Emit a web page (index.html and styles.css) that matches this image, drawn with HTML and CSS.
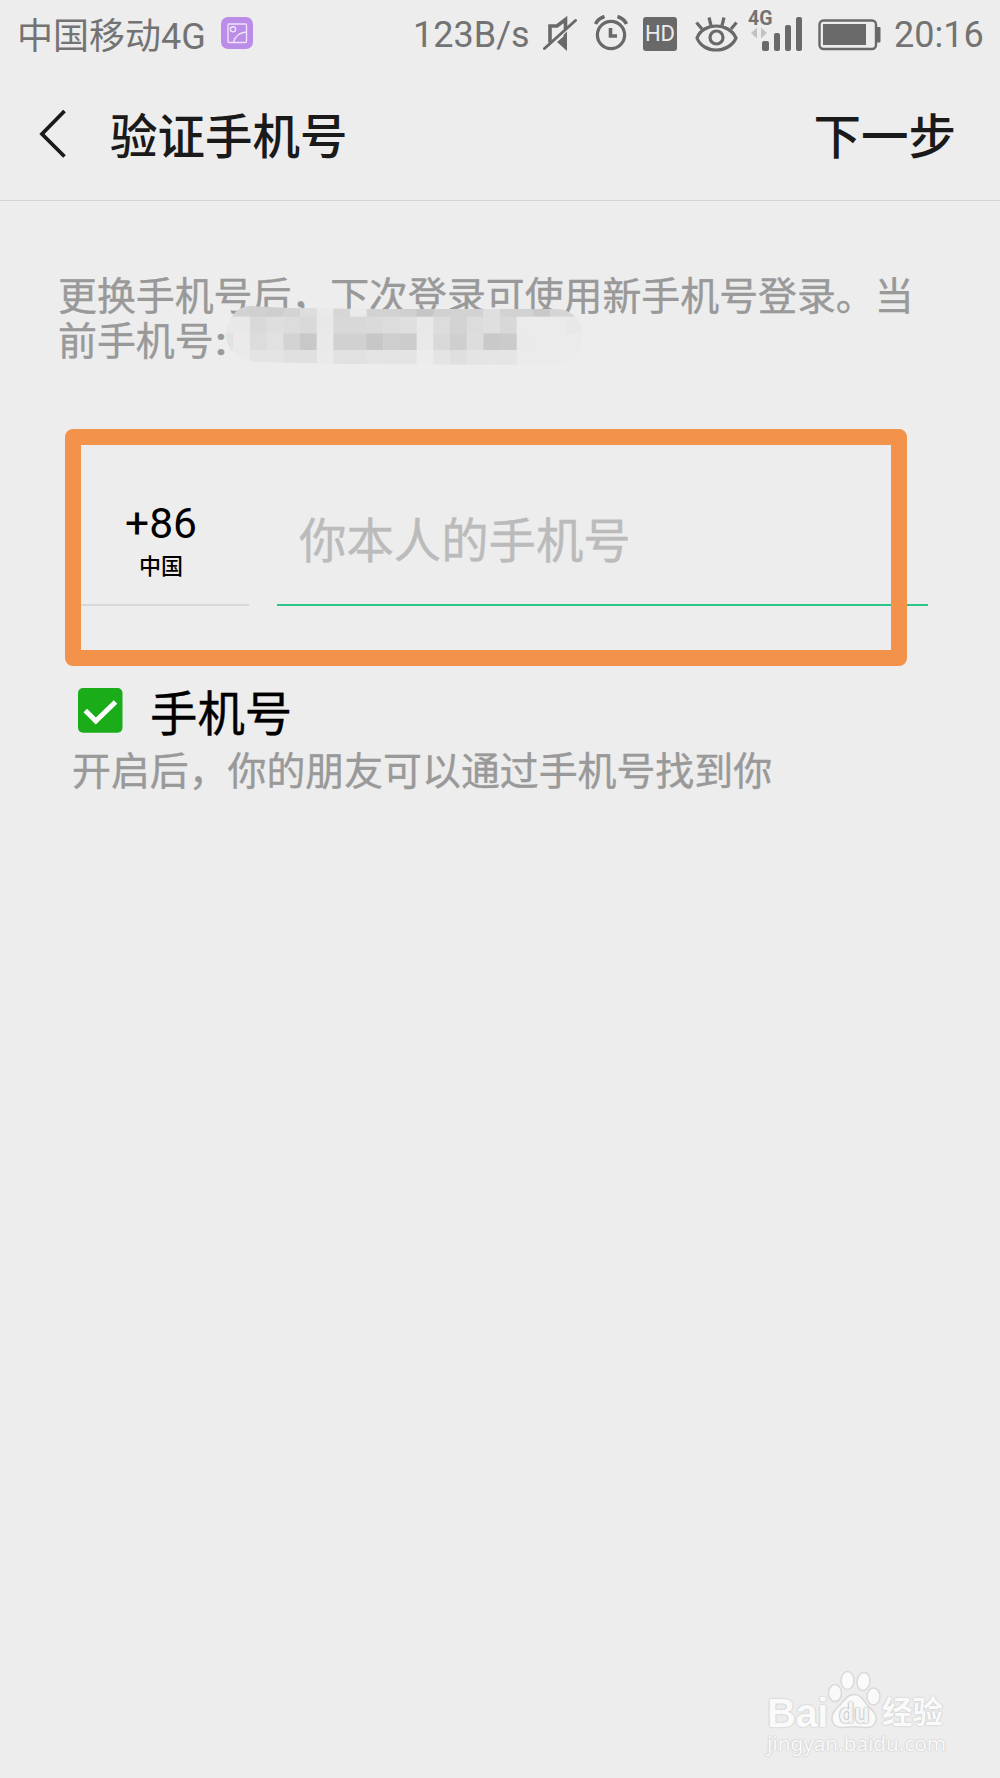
FILE: index.html
```html
<!DOCTYPE html>
<html lang="zh-CN">
<head>
	<meta charset="utf-8">
	<title>验证手机号</title>
	<meta name="viewport" content="width=device-width">
	<link rel="stylesheet" href="styles.css">
</head>
<body>
	<div class="status">
		<span class="carrier">中国移动4G</span>
		<svg class="photo" width="32" height="32" viewBox="0 0 32 32">
			<rect width="32" height="32" rx="7" fill="#bb8ce8"/>
			<g fill="none" stroke="#f0e2fb" stroke-width="1.4">
				<rect x="7" y="7" width="18.500" height="18.500" rx="1"/>
				<circle cx="12" cy="12.300" r="2.600"/>
				<path d="M12.500 25.500C14 19 18.500 15.500 25.500 15"/>
			</g>
		</svg>
		<span class="speed">123B/s</span>
		<svg class="mute" width="34" height="36" viewBox="0 0 34 36">
			<g fill="none" stroke="#696969" stroke-width="3.600">
				<path d="M7 26.500V10h7l8.500-6.500V13"/>
				<path d="M1.500 32.500L32.500 4.500" stroke-linecap="round" stroke-width="3"/>
			</g>
			<path d="M14 26l6.500-5.500V19l3.500-3.500V35z" fill="#696969"/>
		</svg>
		<svg class="alarm" width="34" height="36" viewBox="0 0 34 36">
			<g fill="none" stroke="#696969">
				<circle cx="17" cy="20" r="13.600" stroke-width="3.200"/>
				<path d="M16.500 13v8H23" stroke-width="3.600"/>
				<path d="M1.500 9C3 5.500 6 3 10.500 1.500M32.500 9C31 5.500 28 3 23.500 1.500" stroke-width="3.600"/>
			</g>
		</svg>
		<span class="hd">HD</span>
		<svg class="eye" width="44" height="36" viewBox="0 0 44 36">
			<g fill="none" stroke="#696969" stroke-width="3.200">
				<path d="M3 22C9 6 35 6 42 22C35 38 9 38 3 22z"/>
				<circle cx="22.500" cy="21.500" r="6.500"/>
				<path d="M2.500 6.500l5.500 6.500M15 1.500l2 8M30 1.500L28 9.500M42.500 6.500L37 13"/>
			</g>
		</svg>
		<div class="signal">
			<span class="net">4G</span>
			<svg width="54" height="36" viewBox="0 0 54 36">
				<path d="M2 17l6-5.500v11zM18 17l-6-5.500v11z" fill="#c2c2c2"/>
				<g fill="#696969">
					<rect x="13" y="25" width="7" height="10" rx="2"/>
					<rect x="25" y="17" width="6" height="18" rx="2"/>
					<rect x="36" y="9" width="6" height="26" rx="2"/>
					<rect x="47" y="1" width="6" height="34" rx="2"/>
				</g>
			</svg>
		</div>
		<svg class="battery" width="63" height="32" viewBox="0 0 63 32">
			<rect x="1.500" y="1.500" width="56.500" height="28.500" rx="4" fill="none" stroke="#696969" stroke-width="2.400"/>
			<rect x="5" y="5" width="43" height="21" fill="#696969"/>
			<rect x="58" y="8" width="4.500" height="15.500" rx="1" fill="#696969"/>
		</svg>
		<span class="time">20:16</span>
	</div>

	<div class="header">
		<svg class="back" width="28" height="50" viewBox="0 0 28 50">
			<path d="M25.500 2L3 25L25.500 47.500" fill="none" stroke="#1a1a1a" stroke-width="3.800"/>
		</svg>
		<h1>验证手机号</h1>
		<a class="next">下一步</a>
	</div>

	<div class="tip">
		<p>更换手机号后，下次登录可使用新手机号登录。当<br>前手机号<b>:</b></p>
		<!-- 号码打码 -->
		<svg class="mosaic" width="357" height="60" viewBox="226 306 357 60">
			<defs>
				<clipPath id="brush"><path d="M226 335C227 320 236 306 250 306L290 308L380 309H556C573 309 583 322 583 336C583 352 573 365 553 365L340 364L262 362C240 362 226 350 226 335z"/></clipPath>
			</defs>
			<g id="cells" clip-path="url(#brush)"></g>
		</svg>
	</div>

	<div class="form">
		<div class="code">
			<strong>+86</strong>
			<span>中国</span>
		</div>
		<div class="phone">你本人的手机号</div>
		<div class="frame"></div>
	</div>

	<div class="option">
		<svg width="45" height="45" viewBox="0 0 45 45">
			<rect width="44.500" height="44.800" rx="5" fill="#1aad19"/>
			<path d="M7.300 22.500L17.800 33L37.500 14" fill="none" stroke="#fff" stroke-width="5"/>
		</svg>
		<span>手机号</span>
	</div>
	<p class="note">开启后，你的朋友可以通过手机号找到你</p>

	<div class="watermark">
		<div class="logo">
			<span class="bai">Bai</span>
			<div class="paw">
				<svg width="54" height="60" viewBox="0 0 54 60">
					<g fill="#fafafa" stroke="#d9d9d9" stroke-width="1.500">
						<ellipse cx="8" cy="23" rx="6.500" ry="8.500"/>
						<ellipse cx="20.500" cy="10.500" rx="6.500" ry="9"/>
						<ellipse cx="36.500" cy="11.500" rx="6.500" ry="9" transform="rotate(8 36.500 11.500)"/>
						<ellipse cx="46.500" cy="26.500" rx="6.500" ry="8.500"/>
						<path d="M27 24.500C34 24.500 37 31 41 36C46 41 50 44 49 50C48 57 42 58 37 57.500C30 56.500 24 56.500 17 57.500C10 58 5 55 5 48C5 42 9 39 13 35C17 31 20 24.500 27 24.500z"/>
					</g>
				</svg>
				<span>du</span>
			</div>
			<span class="jy">经验</span>
		</div>
		<div class="url">jingyan.baidu.com</div>
	</div>

	<script type="text/javascript">
		(function(){
			// 每格的灰度, 四行
			var rows = [
				'd8 d2 d0 ce d3 dd e9 d6 ea d2 d2 cf c6 d1 d2 d2 df d2 d2 c9 d5 d6',
				'e9 e8 d9 de dc d9 e8 d8 d8 da dc df e8 dc d3 dc df d8 eb eb eb e8',
				'e2 ea dc e1 d3 c8 e9 d1 d1 c7 cf cc e9 d9 cf dd c9 cb ea eb eb eb',
				'ea ea e4 e4 e0 e0 ea e1 e1 e4 e4 e4 ec e4 df e4 e5 e5 eb eb eb eb'
			];
			var size = 50 / 3;
			var str = '';
			for(var i=0;i<rows.length;i++){
				var cells = rows[i].split(' ');
				for(var j=0;j<cells.length;j++){
					var c = cells[j];
					str += '<rect x="'+ (13 + j) * size +'" y="'+ (18 + i) * size +'" width="17" height="17" fill="#'+ c + c + c +'"/>';
				}
			}
			document.getElementById('cells').innerHTML = str;
		})()
	</script>
</body>
</html>
```

FILE: styles.css
```css
*{
	margin: 0;
	padding: 0;
	box-sizing: border-box;
}
body{
	position: relative;
	height: 1778px;
	background: #ededed;
	font-family: Roboto, "Noto Sans CJK SC", sans-serif;
	overflow: hidden;
}
svg{
	display: block;
	flex: none;
}
.status{
	display: flex;
	height: 68px;
	padding-left: 17px;
	color: #737373;
	font-size: 36px;
	line-height: 70px;
	white-space: nowrap;
}
.carrier{
	width: 204px;
	line-height: 74px;
}
.photo{
	margin-top: 17px;
}
.speed{
	width: 130px;
	margin-left: 160px;
}
.mute{
	margin-top: 16px;
}
.alarm{
	margin: 15px 0 0 17px;
}
.hd{
	width: 34px;
	height: 34px;
	margin: 17px 0 0 15px;
	border-radius: 3px;
	background: #696969;
	color: #ececec;
	font-size: 22px;
	line-height: 33px;
	text-align: center;
}
.eye{
	margin: 16px 0 0 17px;
}
.signal{
	position: relative;
	margin: 16px 0 0 11px;
}
.net{
	position: absolute;
	left: -1px;
	top: -7px;
	font-size: 19.5px;
	font-weight: bold;
	line-height: 20px;
}
.battery{
	margin: 19px 0 0 15px;
}
.time{
	margin-left: 13px;
}
.header{
	display: flex;
	align-items: center;
	height: 133px;
	padding: 0 44px 0 39px;
	border-bottom: 1px solid #d2d2d2;
	color: #1a1a1a;
	font-size: 47.5px;
}
.header h1{
	flex: 1;
	margin-left: 43px;
	padding-top: 8px;
	font-size: 47.5px;
	font-weight: 500;
	line-height: 124px;
}
.next{
	padding-top: 8px;
	font-weight: 500;
	line-height: 124px;
}
.tip{
	position: relative;
	height: 162px;
	padding: 73px 0 0 58px;
	color: #999;
	font-size: 38.9px;
	line-height: 45px;
	white-space: nowrap;
	-webkit-text-stroke: 0.4px #999;
}
.tip b{
	margin-left: 2px;
}
.mosaic{
	position: absolute;
	left: 226px;
	top: 105px;
}
.form{
	position: relative;
	display: flex;
	gap: 28px;
	height: 256px;
	margin-top: 66px;
	padding: 69px 0 0 73px;
}
.code{
	display: flex;
	flex-direction: column;
	align-items: center;
	width: 176px;
	height: 108px;
	border-bottom: 2px solid #d9d9d9;
}
.code strong{
	font-size: 42.5px;
	font-weight: normal;
	line-height: 52px;
}
.code span{
	font-size: 22px;
	font-weight: 500;
	line-height: 34px;
}
.phone{
	width: 651px;
	height: 108px;
	padding: 9px 0 0 22px;
	border-bottom: 2px solid #2bc686;
	color: #bbb;
	font-size: 47.4px;
	line-height: 70px;
	-webkit-text-stroke: 0.4px #bbb;
}
.frame{
	position: absolute;
	left: 65px;
	top: 0;
	width: 842px;
	height: 237px;
	border: 16px solid #f3924a;
	border-radius: 8px;
}
.option{
	display: flex;
	align-items: center;
	gap: 27px;
	height: 50px;
	padding-left: 78px;
	font-size: 47.4px;
}
.option span{
	padding-top: 10px;
	line-height: 50px;
	-webkit-text-stroke: 0.4px #000;
}
.note{
	padding: 12px 0 0 72px;
	color: #999;
	font-size: 38.9px;
	line-height: 50px;
	-webkit-text-stroke: 0.4px #999;
}
.watermark{
	position: absolute;
	left: 767px;
	top: 1670px;
	color: #fafafa;
	text-shadow: 0 0 2px #c4c4c4, 0 0 1px #c4c4c4;
}
.logo{
	display: flex;
	height: 60px;
	line-height: 86px;
}
.bai{
	width: 60px;
	font-family: "Liberation Sans", sans-serif;
	font-size: 40px;
	font-weight: bold;
	letter-spacing: -0.5px;
}
.paw{
	position: relative;
	width: 55px;
}
.paw span{
	position: absolute;
	left: 12px;
	top: 1px;
	color: #f4f4f4;
	font-size: 27px;
	font-weight: bold;
	text-shadow: 0 0 2px #999, 0 0 1px #bbb;
}
.jy{
	font-size: 30.5px;
	font-weight: bold;
}
.url{
	font-family: "Noto Sans", sans-serif;
	font-size: 20.7px;
	line-height: 26px;
}
```
